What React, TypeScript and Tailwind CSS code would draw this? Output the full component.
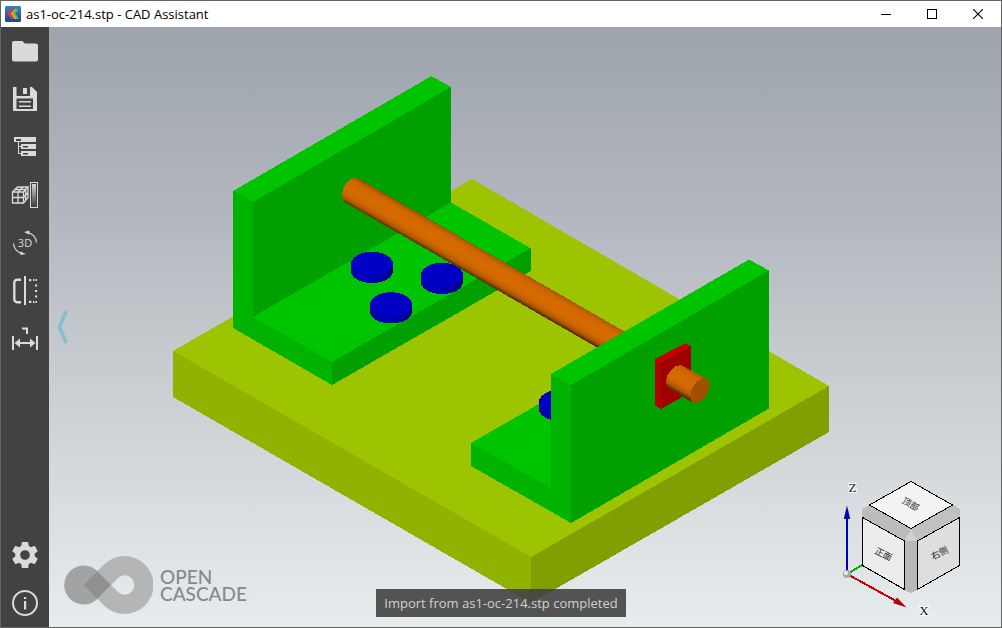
import type { ReactNode } from "react";

const INK = "#dadada";
const SLOT = "#424242";

function Glyph({ children }: { children: ReactNode }) {
  return (
    <svg viewBox="0 0 48 48" className="size-12" aria-hidden="true">
      {children}
    </svg>
  );
}

function FolderIcon() {
  return (
    <Glyph>
      <path
        d="M13 14h8.3l2.6 2.6H35a2 2 0 0 1 2 2v14a2 2 0 0 1-2 2H13a2 2 0 0 1-2-2V16a2 2 0 0 1 2-2z"
        fill={INK}
      />
    </Glyph>
  );
}

function SaveIcon() {
  return (
    <Glyph>
      <path d="M12 12h19l5 5v19H12z" fill={INK} />
      <path d="M15.5 12H29v9H15.5z" fill={SLOT} />
      <path d="M22 13h4v6h-4z" fill={INK} />
      <path d="M15.5 23.5H32V34H15.5z" fill={SLOT} />
      <path d="M18 26h12v1.6H18zM18 30.4h12V32H18z" fill={INK} />
    </Glyph>
  );
}

function TreeIcon() {
  return (
    <Glyph>
      <path d="M13 14h22v5H13zM20 21h15v5H20zM20 28h15v5H20z" fill={INK} />
      <path d="M17.5 19v11.5H20M17.5 23.5H20" stroke={INK} fill="none" />
      <path d="M15 16h5v2h-5zM22 23h5v1.500h-5zM22 30h5v1.500h-5z" fill={SLOT} />
    </Glyph>
  );
}

function ShadingIcon() {
  return (
    <Glyph>
      <defs>
        <linearGradient id="shade" x1="0" y1="0" x2="0" y2="1">
          <stop offset="0" stopColor="#d4d4d4" />
          <stop offset="1" stopColor="#444444" />
        </linearGradient>
      </defs>
      <path
        d="M11.500 21h11v11h-11zM17 21v11M11.500 26.500h11M11.500 21l5-5H27l-4.500 5M17 21l5-5M14 18.500h10.700v10.700M27 16v10.500L22.500 32M22.500 26.500l4.500-5"
        stroke={INK}
        strokeWidth="1.3"
        fill="none"
      />
      <rect x="29.500" y="11.500" width="7" height="25" stroke={INK} fill={SLOT} />
      <rect x="31" y="13" width="4" height="22" fill="url(#shade)" />
    </Glyph>
  );
}

function RotateIcon() {
  return (
    <Glyph>
      <path d="M26 13.300A11 11 0 0 1 35.500 23.500M22 34.700A11 11 0 0 1 12.500 24.500" stroke={INK} strokeWidth="1.2" fill="none" />
      <path d="M23 13l5.500-1.600-.6 4.200zM25 35l-5.500 1-.2-3.600z" fill={INK} />
      <text x="24" y="28" textAnchor="middle" fontSize="11" fill={INK} fontFamily="'Open Sans', sans-serif">
        3D
      </text>
    </Glyph>
  );
}

function ClipIcon() {
  return (
    <Glyph>
      <path d="M20 12.800h-4a2.700 2.700 0 0 0-2.700 2.700v17a2.700 2.700 0 0 0 2.700 2.700h4" stroke={INK} strokeWidth="2.4" fill="none" />
      <path d="M24 9v29" stroke={INK} strokeWidth="2" />
      <path
        d="M28 12h2.300v2.300H28zM32 12h1.500v2H32zM34.500 12h1.500v2h-1.500zM34 17.500h2.200v2H34zM34 23h2.200v2H34zM34 28.500h2.200v2H34zM28 33.700h2.300V36H28zM32 34h1.500v2H32zM34.500 34h1.500v2h-1.500z"
        fill={INK}
      />
    </Glyph>
  );
}

function MeasureIcon() {
  return (
    <Glyph>
      <path d="M12 21v14M36 21v14" stroke={INK} strokeWidth="2" />
      <path d="M16 28h16" stroke={INK} strokeWidth="2" />
      <path d="M13.500 28l5.500-4.600v9.200zM34.500 28L29 23.400v9.200z" fill={INK} />
      <path d="M21 13.400h5V19" stroke={INK} strokeWidth="2" fill="none" />
    </Glyph>
  );
}

function GearIcon() {
  return (
    <Glyph>
      <path
        transform="translate(8.400 8.400) scale(1.3)"
        d="M19.43 12.98c.04-.32.07-.64.07-.98s-.03-.66-.07-.98l2.110-1.650c.19-.15.24-.42.12-.64l-2-3.460c-.12-.22-.39-.3-.61-.22l-2.490 1c-.52-.4-1.080-.73-1.690-.98l-.38-2.650C14.460 2.180 14.250 2 14 2h-4c-.25 0-.46.18-.49.42l-.38 2.650c-.61.25-1.170.59-1.690.98l-2.490-1c-.23-.09-.49 0-.61.22l-2 3.460c-.13.22-.07.49.12.64l2.110 1.650c-.04.32-.07.65-.07.98s.03.66.07.98l-2.110 1.650c-.19.15-.24.42-.12.64l2 3.460c.12.22.39.3.61.22l2.490-1c.52.4 1.080.73 1.690.98l.38 2.650c.03.24.24.42.49.42h4c.25 0 .46-.18.49-.42l.38-2.650c.61-.25 1.170-.59 1.690-.98l2.490 1c.23.09.49 0 .61-.22l2-3.460c.12-.22.07-.49-.12-.64l-2.110-1.650zM12 15.700a3.700 3.700 0 1 1 0-7.400 3.700 3.700 0 0 1 0 7.400z"
        fill={INK}
      />
    </Glyph>
  );
}

function InfoIcon() {
  return (
    <Glyph>
      <circle cx="24" cy="24" r="12" stroke={INK} strokeWidth="2" fill="none" />
      <path d="M23 18h2.200v2H23zM23 22h2.200v8.500H23z" fill={INK} />
    </Glyph>
  );
}

const tools = [
  { label: "Open", icon: <FolderIcon /> },
  { label: "Save", icon: <SaveIcon /> },
  { label: "Structure", icon: <TreeIcon /> },
  { label: "Display mode", icon: <ShadingIcon /> },
  { label: "Rotate view", icon: <RotateIcon /> },
  { label: "Clipping planes", icon: <ClipIcon /> },
  { label: "Measure", icon: <MeasureIcon /> },
];

const footerTools = [
  { label: "Settings", icon: <GearIcon /> },
  { label: "About", icon: <InfoIcon /> },
];

function ToolButton({ label, icon }: { label: string; icon: ReactNode }) {
  return (
    <button type="button" aria-label={label} className="size-12 hover:bg-[#555555]">
      {icon}
    </button>
  );
}

function TitleBar() {
  return (
    <header className="flex h-[26px] shrink-0 items-center bg-white">
      <svg viewBox="0 0 16 16" className="ml-1 size-4" aria-hidden="true">
        <defs>
          <linearGradient id="tile" x1="0" y1="0" x2="0" y2="1">
            <stop offset="0" stopColor="#2f86ca" />
            <stop offset="1" stopColor="#1d4688" />
          </linearGradient>
        </defs>
        <rect width="16" height="16" rx="1.500" fill="url(#tile)" />
        <path d="M6 2.500h3L6 7.500l3.500 5.500H6.500L2 7.500z" fill="#e0364c" />
        <path d="M10 3h1.700L8 7.500l4 5.500h-2.200L6 7.500z" fill="#e8c22c" />
        <path d="M11.700 3H13.500L10.500 7.500l3.500 5.500h-2L8 7.500z" fill="#6cb52d" />
      </svg>
      <h1 className="ml-[5px] font-['Open_Sans',sans-serif] text-[13px] leading-4 text-black">
        as1-oc-214.stp - CAD Assistant
      </h1>
      <div className="ml-auto flex h-full">
        <button type="button" aria-label="Minimize" className="flex w-[46px] items-center justify-center hover:bg-gray-200">
          <svg viewBox="0 0 10 10" className="size-[10px]" shapeRendering="crispEdges">
            <path d="M0 5h10v1H0z" />
          </svg>
        </button>
        <button type="button" aria-label="Maximize" className="flex w-[46px] items-center justify-center hover:bg-gray-200">
          <svg viewBox="0 0 10 10" className="size-[10px]" shapeRendering="crispEdges">
            <path d="M.5.5h9v9h-9z" fill="none" stroke="#000" />
          </svg>
        </button>
        <button type="button" aria-label="Close" className="flex w-[46px] items-center justify-center hover:bg-red-500">
          <svg viewBox="0 0 10 10" className="size-[10px]">
            <path d="M0 0l10 10M10 0L0 10" stroke="#000" strokeWidth="1.1" />
          </svg>
        </button>
      </div>
    </header>
  );
}

function Bolt({ cx, cy }: { cx: number; cy: number }) {
  return (
    <g>
      <path
        d={`M${cx - 21} ${cy}v7a21 12 0 0 0 42 0v-7z`}
        fill="url(#boltSide)"
      />
      <ellipse cx={cx} cy={cy} rx="21" ry="12.200" fill="#0000c4" />
    </g>
  );
}

function Model() {
  return (
    <svg
      viewBox="49 27 952 600"
      className="absolute inset-0 size-full"
      shapeRendering="crispEdges"
      role="img"
      aria-label="Assembly model"
    >
      <defs>
        <linearGradient id="boltSide" x1="0" y1="0" x2="1" y2="0">
          <stop offset="0" stopColor="#0000a0" />
          <stop offset="0.3" stopColor="#0000bc" />
          <stop offset="0.6" stopColor="#0000b0" />
          <stop offset="1" stopColor="#00007c" />
        </linearGradient>
        <linearGradient id="rodShade" gradientUnits="userSpaceOnUse" x1="358.700" y1="178.600" x2="345.100" y2="202.400">
          <stop offset="0" stopColor="#8a4500" />
          <stop offset="0.06" stopColor="#b45a00" />
          <stop offset="0.2" stopColor="#ce6800" />
          <stop offset="0.45" stopColor="#d66b00" />
          <stop offset="0.7" stopColor="#d06800" />
          <stop offset="0.88" stopColor="#b05800" />
          <stop offset="1" stopColor="#5c2e00" />
        </linearGradient>
      </defs>

      <path d="M173 351L472 179 829 386 531 557z" fill="#9cc400" />
      <path d="M173 351L531 557v46L173 397z" fill="#8fb300" />
      <path d="M829 386L531 557v46l298-171z" fill="#7fa000" />

      <path d="M253 317L451 202.500 531 248.500 332 362z" fill="#00c400" />
      <path d="M332 362L531 248v23L332 385z" fill="#00a000" />
      <path d="M253 202L451 87v115.500L253 317z" fill="#00a000" />
      <path d="M233 191L431.500 76 451 87 253 202z" fill="#00c400" />
      <path d="M233 190.500L253 202v115l79 45v23l-99-57z" fill="#00b300" />
      <Bolt cx={372} cy={264} />
      <Bolt cx={442} cy={275} />
      <Bolt cx={391} cy={304.500} />

      <path
        d="M358.700 178.600L706.900 379 693.100 402.800 345.100 202.400C340 199 341.500 190 346 183.500C350 178.500 355 176.500 358.700 178.600z"
        fill="url(#rodShade)"
      />

      <path d="M471 443L551 397v91z" fill="#00c400" />
      <Bolt cx={560} cy={402} />
      <path d="M551 374l20 11v138l-100-57v-23l80 45z" fill="#00b300" />
      <path d="M551 374L749 259.500 769 270.500 571 385.500z" fill="#00c400" />
      <path d="M571 385L769 270.500v138L571 523z" fill="#00a000" />

      <path d="M655 359l30.500-16 5.500 3-30 17z" fill="#c40000" />
      <path d="M655 359l6 3.500V409l-6-3.500z" fill="#b30000" />
      <path d="M661 362.500L691 346v46l-30 17z" fill="#a00000" />
      <path
        d="M682.800 366L706.900 379 693.100 402.800 669.200 389C665 386 665 377 670 371C674 366 679 364 682.800 366z"
        fill="url(#rodShade)"
      />
      <ellipse cx="700" cy="390.700" rx="13.700" ry="7.900" transform="rotate(-60 700 390.700)" fill="#a05000" />
    </svg>
  );
}

function ViewCube() {
  const label = "'Noto Sans CJK SC', sans-serif";
  const axis = "'Liberation Serif', serif";
  return (
    <svg
      viewBox="838 478 126 142"
      className="absolute right-[37px] bottom-[7px] h-[142px] w-[126px]"
      role="img"
      aria-label="View cube"
    >
      <path d="M847 574L864 564" stroke="#00b400" strokeWidth="2" shapeRendering="crispEdges" />
      <g shapeRendering="crispEdges">
        <path d="M862 509l8-4 41-24 42 24 7 4v56l-43 25-6 3-7-3-42-25z" fill="#bdbdbd" />
        <path d="M869.500 505l41.500 24-6.500 12-42-24z" fill="#bcbcbc" />
        <path d="M952.500 505L911 529l6.500 12 42-24z" fill="#c1c1c1" />
        <path d="M904.500 541h13v49l-6.500 3-6.500-3z" fill="#b8b8b8" />
        <path d="M911 529l-6.500 12h13z" fill="#d0d0d0" />
        <path d="M911 481.500l41.500 23.500L911 528.500 869.500 505z" fill="#f3f3f3" stroke="#000" />
        <path d="M862.500 517.500l42 23.500v48.500l-42-24z" fill="#ececec" stroke="#000" />
        <path d="M959.500 517.500l-42 23.500v48.500l42-24z" fill="#dedede" stroke="#000" />
      </g>
      <g fontSize="9" textAnchor="middle" fill="#222222" fontFamily={label}>
        <text transform="translate(909 507) rotate(30)">顶部</text>
        <text transform="translate(882 557) rotate(27)">正面</text>
        <text transform="translate(941 556) rotate(-27)">右侧</text>
      </g>
      <path d="M847 574v-56" stroke="#0000c0" strokeWidth="2" shapeRendering="crispEdges" />
      <path d="M847 505.500l3.200 13.500h-6.400z" fill="#0000c0" />
      <path d="M847 574l49 27" stroke="#c80000" strokeWidth="2" shapeRendering="crispEdges" />
      <path d="M906.500 607.500l-9.500-10-4 5.500z" fill="#b40000" />
      <circle cx="847" cy="574" r="4" fill="#a8a8a8" />
      <circle cx="846" cy="573" r="2" fill="#f0f0f0" />
      <g fontSize="13" textAnchor="middle" fill="#111111" stroke="#ffffff" strokeWidth="2" paintOrder="stroke" fontFamily={axis}>
        <text x="852.500" y="492">Z</text>
        <text x="924" y="615">X</text>
      </g>
    </svg>
  );
}

function Brand() {
  return (
    <div className="absolute bottom-[13px] left-[15px] flex items-center gap-[7px]">
      <svg viewBox="64 556 89 58" className="h-[58px] w-[89px]" aria-hidden="true">
        <path d="M111.300 585L97.800 571.500A19.500 19.500 0 1 0 97.800 598.500z" fill="#a2a3a4" />
        <path
          fillRule="evenodd"
          d="M83.500 585L104 564.500A29 29 0 1 1 104 605.500zM111 585L118 578A9.700 9.700 0 1 1 118 592z"
          fill="#b4b5b6"
        />
        <path d="M83.500 585L97.300 571.300 111 585 97.300 598.700z" fill="#8f9091" />
      </svg>
      <p className="font-['Lato',sans-serif] text-[19px] leading-[17px] font-medium text-[#868a8c]">
        OPEN
        <br />
        CASCADE
      </p>
    </div>
  );
}

export default function App() {
  return (
    <div className="flex h-screen flex-col overflow-hidden border border-[#646464]">
      <TitleBar />
      <div className="relative flex min-h-0 flex-1">
        <nav aria-label="Tools" className="flex w-12 shrink-0 flex-col justify-between bg-[#424242]">
          <div className="flex flex-col">
            {tools.map((t) => (
              <ToolButton key={t.label} {...t} />
            ))}
          </div>
          <div className="flex flex-col">
            {footerTools.map((t) => (
              <ToolButton key={t.label} {...t} />
            ))}
          </div>
        </nav>
        <main className="relative flex flex-1 items-center bg-[linear-gradient(#9da4ab_0%,#b4b8c1_33%,#c3c7cb_50%,#e7ecee_100%)]">
          <Model />
          <button type="button" aria-label="Show panel" className="relative ml-2 h-9 w-3">
            <svg viewBox="0 0 12 36" className="h-9 w-3">
              <path d="M8.500 3.500L2.500 18l6 14.500" stroke="#86bdd1" strokeWidth="3.600" strokeLinecap="round" fill="none" />
            </svg>
          </button>
          <Brand />
          <ViewCube />
        </main>
        <div className="pointer-events-none absolute inset-x-0 bottom-[10px] flex justify-center">
          <p role="status" className="bg-[#424242]/90 px-2 py-1 font-['Open_Sans',sans-serif] text-[13px] leading-5 text-[#d0d0d0]">
            Import from as1-oc-214.stp completed
          </p>
        </div>
      </div>
    </div>
  );
}
